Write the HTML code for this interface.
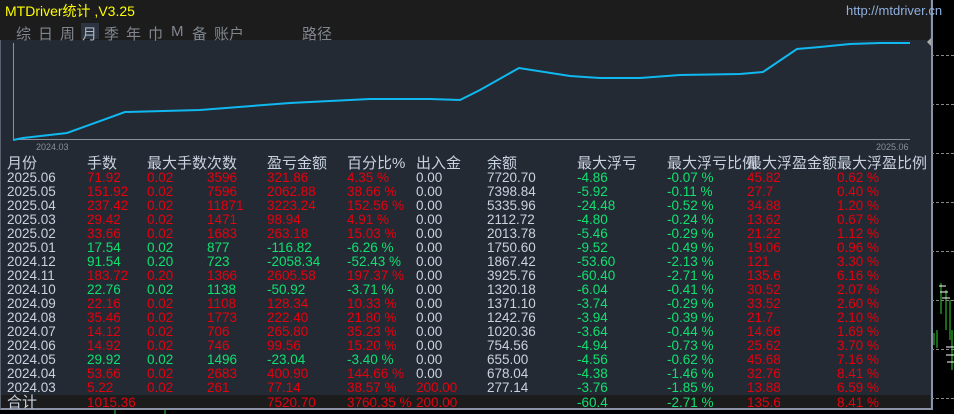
<!DOCTYPE html><html><head><meta charset="utf-8"><style>
*{margin:0;padding:0}
body{width:954px;height:414px;background:#000;position:relative;overflow:hidden;font-family:"Liberation Sans","Noto Sans CJK SC",sans-serif}
#p{position:absolute;left:0;top:0;width:930px;height:408px;background:#242a33;border-right:2px solid #8a94a6;border-bottom:2px solid #8a94a6;border-left:1px solid #5a6272}
#top{position:absolute;left:0;top:0;width:930px;height:40px;background:#1c1c1c}
.t{position:absolute;white-space:nowrap;font-size:13.5px;line-height:14px}
.r{color:#e6000e}.g{color:#10e070}.w{color:#c8d2e0}
.tab{position:absolute;top:23px;font-size:15px;color:#80868f}
.dash{position:absolute;left:931px;width:23px;border-top:1px dashed #888}
</style></head><body>
<div id="p"></div>
<div id="top"></div>
<div class="t" style="left:5px;top:3px;color:#ffff00;font-size:14px;line-height:16px">MTDriver统计 ,V3.25</div>
<div class="t" style="left:846px;top:4px;color:#8fb0e0;font-size:13px">http://mtdriver.cn</div>
<div style="position:absolute;left:81px;top:23px;width:18px;height:16px;background:#2c3440"></div>
<div class="tab" style="left:16px">综</div><div class="tab" style="left:38px">日</div><div class="tab" style="left:60px">周</div><div class="tab" style="left:82px;color:#aab4c2">月</div><div class="tab" style="left:104px">季</div><div class="tab" style="left:126px">年</div><div class="tab" style="left:148px">巾</div><div class="tab" style="left:171px">M</div><div class="tab" style="left:192px">备</div><div class="tab" style="left:214px">账户</div><div class="tab" style="left:302px">路径</div>
<svg style="position:absolute;left:0;top:0" width="954" height="414">
<line x1="13.5" y1="43" x2="13.5" y2="139" stroke="#8a8f98"/>
<line x1="13" y1="139.5" x2="910" y2="139.5" stroke="#8a8f98"/>
<polyline fill="none" stroke="#10b8f0" stroke-width="2" points="13,140 23,138 67,133 125,112 200,110 290,103 370,99 430,99 460,100 480,90 519,68 570,76 600,78 640,78 680,75 740,74 763,72 797,49 820,47 850,44 880,43 910,43"/>
<text x="36" y="150" fill="#8a8f98" font-size="9" font-family="Liberation Sans">2024.03</text>
<text x="876" y="150" fill="#8a8f98" font-size="9" font-family="Liberation Sans">2025.06</text>
<polygon points="927,42 931,38 931,46" fill="#aaa"/>
<g stroke="#30d030"><line x1="941" y1="283" x2="941" y2="314"/><line x1="946" y1="290" x2="946" y2="330"/><line x1="950" y1="300" x2="950" y2="340"/><line x1="934" y1="333" x2="934" y2="345"/><line x1="937" y1="330" x2="937" y2="348"/><line x1="952" y1="330" x2="952" y2="370"/><line x1="115" y1="410" x2="115" y2="414"/><line x1="165" y1="410" x2="165" y2="414"/></g>
<g stroke="#fff"><line x1="939" y1="286" x2="946" y2="286"/><line x1="940" y1="292" x2="948" y2="292"/><line x1="942" y1="298" x2="950" y2="298"/><line x1="946" y1="347" x2="954" y2="347"/><line x1="946" y1="355" x2="954" y2="355"/><line x1="947" y1="362" x2="954" y2="362"/></g>
</svg>
<div class="dash" style="top:55px"></div><div class="dash" style="top:104px"></div><div class="dash" style="top:153px"></div><div class="dash" style="top:202px"></div><div class="dash" style="top:251px"></div><div class="dash" style="top:300px"></div><div class="dash" style="top:349px"></div><div class="dash" style="top:398px"></div>
<div style="position:absolute;left:1px;top:395px;width:929px;height:13px;background:#1c1c1c"></div>
<div id="tbl"></div>
<script>
const cols=[7,87,147,207,267,347,416,487,577,667,747,837];
const rows=[
["2025.06","71.92","0.02","3596","321.86","4.35 %","0.00","7720.70","-4.86","-0.07 %","45.82","0.62 %","r"],
["2025.05","151.92","0.02","7596","2062.88","38.66 %","0.00","7398.84","-5.92","-0.11 %","27.7","0.40 %","r"],
["2025.04","237.42","0.02","11871","3223.24","152.56 %","0.00","5335.96","-24.48","-0.52 %","34.88","1.20 %","r"],
["2025.03","29.42","0.02","1471","98.94","4.91 %","0.00","2112.72","-4.80","-0.24 %","13.62","0.67 %","r"],
["2025.02","33.66","0.02","1683","263.18","15.03 %","0.00","2013.78","-5.46","-0.29 %","21.22","1.12 %","r"],
["2025.01","17.54","0.02","877","-116.82","-6.26 %","0.00","1750.60","-9.52","-0.49 %","19.06","0.96 %","g"],
["2024.12","91.54","0.20","723","-2058.34","-52.43 %","0.00","1867.42","-53.60","-2.13 %","121","3.30 %","g"],
["2024.11","183.72","0.20","1366","2605.58","197.37 %","0.00","3925.76","-60.40","-2.71 %","135.6","6.16 %","r"],
["2024.10","22.76","0.02","1138","-50.92","-3.71 %","0.00","1320.18","-6.04","-0.41 %","30.52","2.07 %","g"],
["2024.09","22.16","0.02","1108","128.34","10.33 %","0.00","1371.10","-3.74","-0.29 %","33.52","2.60 %","r"],
["2024.08","35.46","0.02","1773","222.40","21.80 %","0.00","1242.76","-3.94","-0.39 %","21.7","2.10 %","r"],
["2024.07","14.12","0.02","706","265.80","35.23 %","0.00","1020.36","-3.64","-0.44 %","14.66","1.69 %","r"],
["2024.06","14.92","0.02","746","99.56","15.20 %","0.00","754.56","-4.94","-0.73 %","25.62","3.70 %","r"],
["2024.05","29.92","0.02","1496","-23.04","-3.40 %","0.00","655.00","-4.56","-0.62 %","45.68","7.16 %","g"],
["2024.04","53.66","0.02","2683","400.90","144.66 %","0.00","678.04","-4.38","-1.46 %","32.76","8.41 %","r"],
["2024.03","5.22","0.02","261","77.14","38.57 %","200.00","277.14","-3.76","-1.85 %","13.88","6.59 %","r"],
["合计","1015.36","","","7520.70","3760.35 %","200.00","","-60.4","-2.71 %","135.6","8.41 %","r"]];
let h="";
const hx=[7,87,147,207,267,347,416,487,577,667,747,837];
const htxt=["月份","手数","最大手数次数","","盈亏金额","百分比%","出入金","余额","最大浮亏","最大浮亏比例","最大浮盈金额","最大浮盈比例"];
htxt.forEach((s,i)=>{if(s)h+=`<div class="t w" style="left:${hx[i]}px;top:156px;font-size:15px;line-height:16px">${s}</div>`});
rows.forEach((r,j)=>{const y=171+j*14+(j==16?1:0);const c=r[12];
r.slice(0,12).forEach((s,i)=>{let cl;if(i==0||i==6||i==7)cl="w";else if(i==8||i==9)cl="g";else if(i==10||i==11)cl="r";else cl=c;
if(j==16&&i==0){h+=`<div class="t w" style="left:7px;top:${y-1}px;font-size:15px;line-height:16px">${s}</div>`;return;}
if(j==16&&i==6)cl="r";
if(j==15&&i==6)cl="r";
h+=`<div class="t ${cl}" style="left:${cols[i]}px;top:${y}px">${s}</div>`;});});
document.getElementById("tbl").innerHTML=h;
</script>
</body></html>
